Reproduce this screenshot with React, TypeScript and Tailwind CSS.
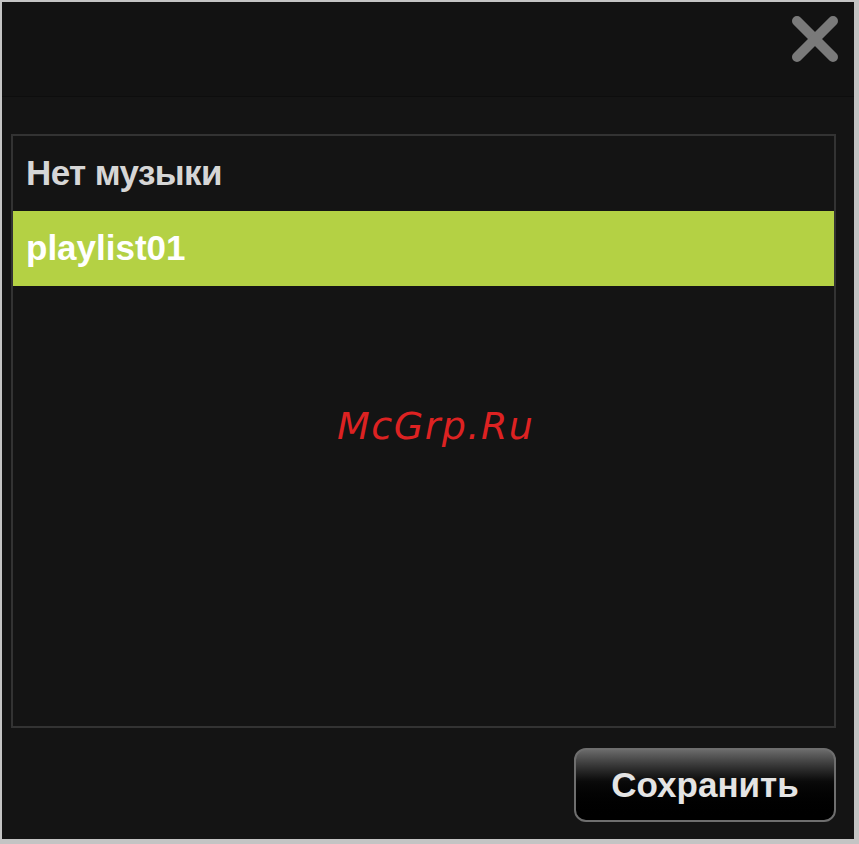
import React from "react";

export default function App() {
  return (
    <div className="w-[859px] h-[844px] bg-[#c4c4c4] pl-[2px] pt-[2px] pr-[5px] pb-[5px]" style={{ fontFamily: '"Liberation Sans", Arial, sans-serif' }}>
      <div className="relative w-full h-full bg-[#141414] flex flex-col">
        <div className="h-[95px] bg-[#121212] border-b border-[#0d0d0d] flex justify-end items-start pt-[12px] pr-[14px]">
          <svg width="50" height="50" viewBox="0 0 50 50">
            <line x1="7" y1="7" x2="43" y2="43" stroke="#7a7a7a" strokeWidth="10" strokeLinecap="round" />
            <line x1="43" y1="7" x2="7" y2="43" stroke="#7a7a7a" strokeWidth="10" strokeLinecap="round" />
          </svg>
        </div>
        <div className="ml-[9px] mr-[18px] mt-[37px] h-[594px] border-2 border-[#333] flex flex-col">
          <div className="h-[75px] flex items-center pl-[13px] text-[35px] font-bold text-[#d6d6d6] tracking-[-0.6px]">Нет музыки</div>
          <div className="h-[75px] bg-[#b4d144] flex items-center pl-[13px] text-[35px] font-bold text-white">playlist01</div>
        </div>
        <div className="flex justify-end mr-[18px] mt-[20px]">
          <button className="w-[262px] h-[74px] rounded-[12px] border-2 border-[#6e6e6e] bg-linear-to-b from-[#6a6a6a] via-[#0a0a0a] via-45% to-black text-[35px] font-bold text-[#e4e4e4] flex items-center justify-center">
            Сохранить
          </button>
        </div>
        <div className="absolute left-[335px] top-[396px] text-[38px] italic text-[#dd2222] tracking-[1.5px]" style={{ fontFamily: '"DejaVu Sans", sans-serif' }}>
          McGrp.Ru
        </div>
      </div>
    </div>
  );
}
